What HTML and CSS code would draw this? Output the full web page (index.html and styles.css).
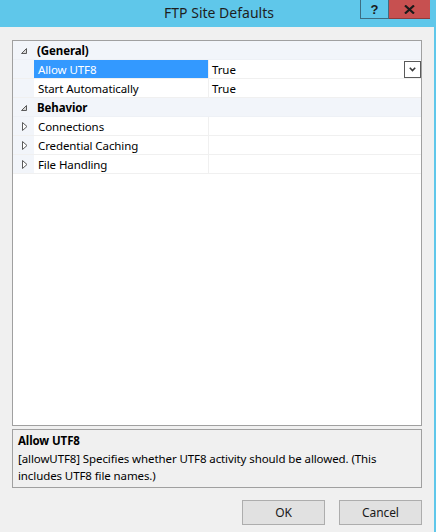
FILE: index.html
```html
<!DOCTYPE html>
<html>
<head>
<meta charset="utf-8">
<title>FTP Site Defaults</title>
<link rel="stylesheet" href="styles.css">
</head>
<body>
<div class="window">
  <div class="titlebar">
    <div class="spacer"></div>
    <div class="title">FTP Site Defaults</div>
    <div class="caption-buttons">
      <div class="cap-btn help">?</div>
      <div class="cap-btn close">
        <svg width="11" height="9" viewBox="0 0 11 9"><path d="M1 0.5 L10 8.5 M10 0.5 L1 8.5" stroke="#1a1a1a" stroke-width="2.2" fill="none"/></svg>
      </div>
    </div>
  </div>
  <div class="content">
    <div class="grid">
      <div class="row cat">
        <span class="margin"><svg class="glyph" width="6" height="6" viewBox="0 0 6 6"><polygon points="5.5,0.5 5.5,5.5 0.5,5.5" fill="#d8d8d8" stroke="#5a5a5a" stroke-width="1"/></svg></span>
        <span class="cat-label">(General)</span>
      </div>
      <div class="row prop selected">
        <span class="margin"></span>
        <span class="name">Allow UTF8</span>
        <span class="sep"></span>
        <span class="value"><span class="val-text">True</span><span class="dropdown"><svg width="7" height="5" viewBox="0 0 7 5"><path d="M0.8 0.8 L3.5 3.6 L6.2 0.8" stroke="#3a3a3a" stroke-width="1.6" fill="none"/></svg></span></span>
      </div>
      <div class="row prop">
        <span class="margin"></span>
        <span class="name">Start Automatically</span>
        <span class="sep"></span>
        <span class="value"><span class="val-text">True</span></span>
      </div>
      <div class="row cat">
        <span class="margin"><svg class="glyph" width="6" height="6" viewBox="0 0 6 6"><polygon points="5.5,0.5 5.5,5.5 0.5,5.5" fill="#d8d8d8" stroke="#5a5a5a" stroke-width="1"/></svg></span>
        <span class="cat-label">Behavior</span>
      </div>
      <div class="row prop">
        <span class="margin"><svg class="glyph-r" width="6" height="9" viewBox="0 0 6 9"><polygon points="0.5,0.5 5,4.5 0.5,8.5" fill="#fff" stroke="#5a5a5a" stroke-width="1"/></svg></span>
        <span class="name">Connections</span>
        <span class="sep"></span>
        <span class="value"></span>
      </div>
      <div class="row prop">
        <span class="margin"><svg class="glyph-r" width="6" height="9" viewBox="0 0 6 9"><polygon points="0.5,0.5 5,4.5 0.5,8.5" fill="#fff" stroke="#5a5a5a" stroke-width="1"/></svg></span>
        <span class="name">Credential Caching</span>
        <span class="sep"></span>
        <span class="value"></span>
      </div>
      <div class="row prop">
        <span class="margin"><svg class="glyph-r" width="6" height="9" viewBox="0 0 6 9"><polygon points="0.5,0.5 5,4.5 0.5,8.5" fill="#fff" stroke="#5a5a5a" stroke-width="1"/></svg></span>
        <span class="name">File Handling</span>
        <span class="sep"></span>
        <span class="value"></span>
      </div>
    </div>
    <div class="desc">
      <div class="desc-title">Allow UTF8</div>
      <div class="desc-text">[allowUTF8] Specifies whether UTF8 activity should be allowed. (This includes UTF8 file names.)</div>
    </div>
    <div class="buttons">
      <div class="button">OK</div>
      <div class="button">Cancel</div>
    </div>
  </div>
</div>
</body>
</html>
```
FILE: styles.css
```css
* { box-sizing: border-box; }
html, body { margin: 0; padding: 0; }
body {
  background: #f0f0f0;
  font-family: "Noto Sans", "Open Sans", sans-serif;
  font-size: 11.5px;
  letter-spacing: -0.1px;
  color: #000;
}
.window {
  width: 436px;
  height: 532px;
  border-right: 2px solid #5fc7ea;
  display: flex;
  flex-direction: column;
  background: #f0f0f0;
}
.titlebar {
  height: 27px;
  background: #5fc7ea;
  display: grid;
  grid-template-columns: 1fr auto 1fr;
  align-items: start;
  flex: none;
}
.title {
  font-size: 14px;
  letter-spacing: 0;
  line-height: 26px;
  color: #1e1e1e;
  white-space: nowrap;
  margin-left: 4px;
}
.caption-buttons {
  justify-self: end;
  display: flex;
  margin-right: 4px;
}
.cap-btn {
  height: 19px;
  display: flex;
  align-items: center;
  justify-content: center;
}
.help {
  width: 29px;
  border: 1px solid #3d6e82;
  border-top: none;
  font-weight: bold;
  font-size: 13px;
  color: #1a1a1a;
  font-family: "Liberation Sans", sans-serif;
}
.close {
  width: 41px;
  background: #c75050;
  border-bottom: 1px solid #8e3b3b;
}
.content {
  flex: 1;
  display: flex;
  flex-direction: column;
  padding: 13px 12px 0 12px;
}
.grid {
  height: 386px;
  border: 1px solid #a0a0a0;
  background: #fff;
  flex: none;
}
.row {
  height: 19px;
  border-bottom: 1px solid #f0f0f0;
  line-height: 17px;
}
.cat {
  background: #f2f5fa;
  display: flex;
  border-bottom-color: #eef1f6;
}
.cat-label {
  font-weight: bold;
  padding-left: 3px;
  padding-top: 1px;
}
.prop {
  display: grid;
  grid-template-columns: 21px 174px 1px 1fr;
}
.margin {
  width: 21px;
  height: 18px;
  background: #f2f5fa;
  display: flex;
  align-items: center;
  justify-content: flex-start;
  flex: none;
}
.glyph { margin-left: 8px; margin-top: 1px; }
.glyph-r { margin-left: 9px; margin-top: 1px; }
.name {
  padding-left: 4px;
  padding-top: 1px;
  white-space: nowrap;
  overflow: hidden;
}
.sep { background: #f0f0f0; }
.value {
  padding-left: 3px;
  display: flex;
  justify-content: space-between;
  align-items: flex-start;
}
.val-text { padding-top: 1px; }
.selected .name {
  background: #3399ff;
  color: #fff;
}
.dropdown {
  width: 17px;
  height: 17px;
  margin-top: 1px;
  border: 1px solid #5a5a5a;
  background: #fff;
  display: flex;
  align-items: center;
  justify-content: center;
}
.desc {
  margin-top: 3px;
  height: 59px;
  border: 1px solid #a0a0a0;
  padding: 2px 5px 0 5px;
  line-height: 17px;
  flex: none;
}
.desc-title {
  font-weight: bold;
  margin-bottom: 1px;
}
.buttons {
  margin-top: 12px;
  display: flex;
  justify-content: flex-end;
  gap: 14px;
}
.button {
  width: 83px;
  height: 25px;
  background: #e1e1e1;
  border: 1px solid #adadad;
  display: flex;
  align-items: center;
  justify-content: center;
  color: #1a1a1a;
  font-size: 12px;
}
```
